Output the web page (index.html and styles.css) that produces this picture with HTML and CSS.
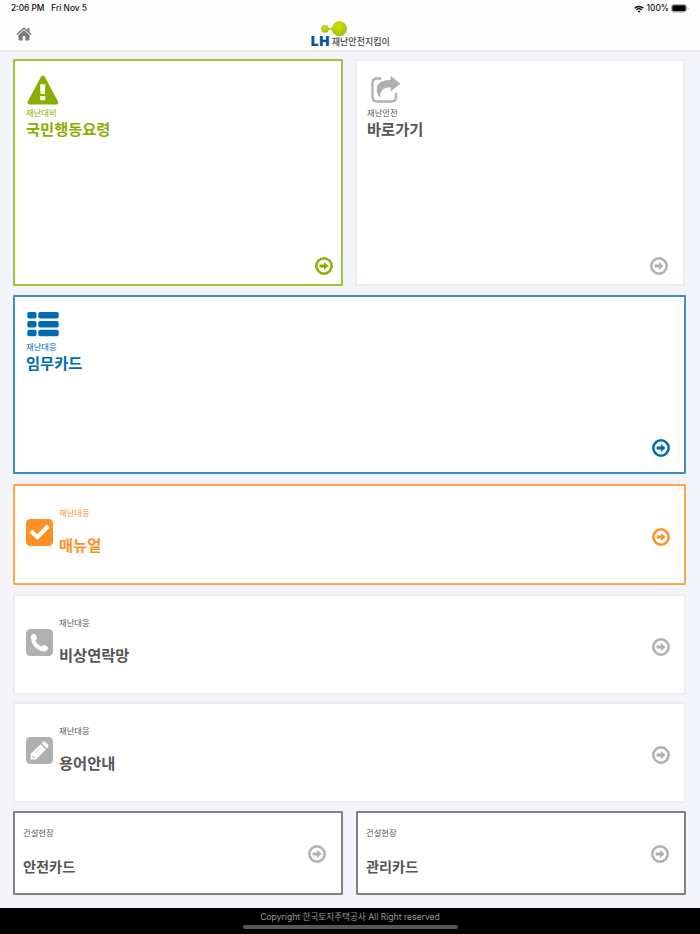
FILE: index.html
```
<!DOCTYPE html>
<html lang="ko">
<head>
  <meta charset="utf-8">
  <title>LH 재난안전지킴이</title>
  <link rel="stylesheet" href="styles.css">
</head>
<body>
  <svg width="0" height="0" class="defs">
    <symbol id="arrow" viewBox="0 0 18 18">
      <circle cx="9" cy="9" r="7.7" fill="none" stroke="currentColor" stroke-width="2.5"/>
      <path d="M4.6 7.500H9V4.900L13.500 9 9 13.100V10.500H4.6z" fill="currentColor"/>
    </symbol>
  </svg>

  <div class="status">
    <span class="time">2:06 PM</span>
    <span class="date">Fri Nov 5</span>
    <svg class="wifi" width="10" height="8" viewBox="0 0 10 8">
      <path d="M.7 3.2a6.2 6.2 0 0 1 8.6 0M2.3 4.9a3.9 3.9 0 0 1 5.4 0" fill="none" stroke="#111" stroke-width="1.4"/>
      <path d="M5 7.7L3.5 6.2a2.2 2.2 0 0 1 3 0z" fill="#111"/>
    </svg>
    <span class="percent">100%</span>
    <svg class="battery" width="18" height="9" viewBox="0 0 18 9">
      <rect x=".5" y=".5" width="15" height="7.6" rx="2.2" fill="#fff" stroke="#aaa"/>
      <rect x="1.3" y="1.3" width="13.4" height="6" rx="1.4" fill="#000"/>
      <path d="M16.6 3v2.7q1-.4 1-1.35T16.600 3z" fill="#aaa"/>
    </svg>
  </div>

  <header class="header">
    <svg class="home" width="16" height="14" viewBox="0 0 16 14">
      <path d="M8 .3L.3 7l.9 1L8 2.200 14.800 8l.9-1L13.400 5V.9h-2v2.400z" fill="#7b7b7b"/>
      <path d="M8 3.300L2.500 8v4.700q0 .7.700.7h3.500V9.300h2.600v4.100h3.500q.7 0 .7-.7V8z" fill="#7b7b7b"/>
    </svg>
    <div class="logo">
      <svg class="drops" width="28" height="17" viewBox="0 0 28 17">
        <defs>
          <radialGradient id="lime" cx=".45" cy=".35" r=".65">
            <stop offset="0" stop-color="#d2e200"/>
            <stop offset="1" stop-color="#98c211"/>
          </radialGradient>
        </defs>
        <circle cx="5" cy="7.800" r="3.900" fill="url(#lime)"/>
        <path d="M7.500 6.500Q10 8.600 14.500 4.500v6.600Q10 7.200 7.500 9.600z" fill="#b3d00a"/>
        <circle cx="19.500" cy="7.700" r="7.500" fill="url(#lime)"/>
      </svg>
      <b class="lh">LH</b>
      <span class="name">재난안전지킴이</span>
    </div>
  </header>

  <main class="cards">
    <div class="row top">
      <a class="card tall green">
        <svg class="icon" width="32" height="30" viewBox="0 0 32 30">
          <path d="M14 1.800q1.900-2.500 3.800 0L31 26.500q1 2.700-1.500 3H2.300Q-.2 29.200.8 26.500z" fill="currentColor"/>
          <path d="M13 9.300h5.400l-.6 9.700h-4.200zM13.200 21h5v4.300h-5z" fill="#fff"/>
        </svg>
        <span class="sub">재난대비</span>
        <strong class="title">국민행동요령</strong>
        <svg class="arrow"><use href="#arrow"/></svg>
      </a>
      <a class="card tall plain share">
        <svg class="icon" width="32" height="30" viewBox="0 0 32 30">
          <path d="M11.500 3.500H8Q3.500 3.500 3.500 8v14Q3.500 26.500 8 26.500h14.500q4.500 0 4.500-4.500V19" fill="none" stroke="#b0b0b0" stroke-width="2.300" stroke-linecap="round"/>
          <path d="M21.500.8L31.500 8.700 21.500 16.500V12.200Q11 12 11 23 5.500 15 9 9.500 12.500 4.800 21.500 5z" fill="#b0b0b0"/>
        </svg>
        <span class="sub">재난안전</span>
        <strong class="title">바로가기</strong>
        <svg class="arrow"><use href="#arrow"/></svg>
      </a>
    </div>

    <a class="card tall blue">
      <svg class="icon" width="32" height="26" viewBox="0 0 32 26" fill="currentColor">
        <rect x=".3" y="1" width="9.200" height="6.600" rx="1.800"/>
        <rect x="11.300" y="1" width="20.400" height="6.600" rx="1.800"/>
        <rect x=".3" y="9.900" width="9.200" height="6.600" rx="1.800"/>
        <rect x="11.300" y="9.900" width="20.400" height="6.600" rx="1.800"/>
        <rect x=".3" y="18.700" width="9.200" height="6.600" rx="1.800"/>
        <rect x="11.300" y="18.700" width="20.400" height="6.600" rx="1.800"/>
      </svg>
      <span class="sub">재난대응</span>
      <strong class="title">임무카드</strong>
      <svg class="arrow"><use href="#arrow"/></svg>
    </a>

    <a class="card wide orange">
      <svg class="icon" width="27" height="27" viewBox="0 0 27 27">
        <rect width="27" height="27" rx="4.500" fill="currentColor"/>
        <path d="M6.300 13.500l5 4.600L20.700 8.500" fill="none" stroke="#fff" stroke-width="4.200" stroke-linecap="square"/>
      </svg>
      <div class="text">
        <span class="sub">재난대응</span>
        <strong class="title">매뉴얼</strong>
      </div>
      <svg class="arrow"><use href="#arrow"/></svg>
    </a>

    <a class="card wide plain phone">
      <svg class="icon" width="27" height="27" viewBox="0 0 27 27">
        <rect width="27" height="27" rx="4.500" fill="#b0b0b0"/>
        <path d="M7.800 4.800Q4.700 5.500 4.800 8.700 6 19.500 17 22.400q4.300.5 5.300-3.400 0-.7-.5-1L18.300 16q-.8-.3-1.300.3l-1.500 1.500Q11.500 16 9.300 11.700l1.600-1.600q.5-.5.200-1.200L9.300 5.300Q8.800 4.500 7.800 4.800z" fill="#fff"/>
      </svg>
      <div class="text">
        <span class="sub">재난대응</span>
        <strong class="title">비상연락망</strong>
      </div>
      <svg class="arrow"><use href="#arrow"/></svg>
    </a>

    <a class="card wide plain terms">
      <svg class="icon" width="27" height="27" viewBox="0 0 27 27">
        <rect width="27" height="27" rx="4.500" fill="#b0b0b0"/>
        <path d="M4.600 22.500V17L14.600 7.200 19.800 12.400 10 22.500zM15.600 6.200l1.200-1.200q1.400-1 2.700 0L22 7.600q1 1.200 0 2.600l-1.200 1.200z" fill="#fff"/>
        <path d="M9.500 16L14.500 11M6.800 18.300v2H9" fill="none" stroke="#b0b0b0" stroke-width=".7"/>
      </svg>
      <div class="text">
        <span class="sub">재난대응</span>
        <strong class="title">용어안내</strong>
      </div>
      <svg class="arrow"><use href="#arrow"/></svg>
    </a>

    <div class="row bottom">
      <a class="card small dark">
        <div class="text">
          <span class="sub">건설현장</span>
          <strong class="title">안전카드</strong>
        </div>
        <svg class="arrow"><use href="#arrow"/></svg>
      </a>
      <a class="card small dark">
        <div class="text">
          <span class="sub">건설현장</span>
          <strong class="title">관리카드</strong>
        </div>
        <svg class="arrow"><use href="#arrow"/></svg>
      </a>
    </div>
  </main>

  <footer class="footer">
    <span>Copyright 한국토지주택공사 All Right reserved</span>
    <div class="indicator"></div>
  </footer>
</body>
</html>
```
FILE: styles.css
```
* {
  box-sizing: border-box;
}

body {
  margin: 0;
  height: 934px;
  display: flex;
  flex-direction: column;
  overflow: hidden;
  background: #f4f5fa;
  color: #555;
  font-family: "Noto Sans CJK KR", sans-serif;
}

svg {
  display: block;
  flex: none;
}

.defs {
  position: absolute;
}

.status {
  height: 17px;
  padding: 0 11px;
  display: flex;
  align-items: center;
  background: #fefefe;
  color: #111;
  font: 500 8.3px/17px Inter, sans-serif;
}

.date {
  margin-left: 7px;
}

.wifi {
  margin-left: auto;
}

.percent {
  margin: 0 2px 0 3px;
}

.header {
  height: 35px;
  padding: 10px 16px 0;
  display: grid;
  grid-template-columns: 1fr auto 1fr;
  background: #fefefe;
  border-bottom: 2px solid #e6e6e9;
}

.logo {
  display: flex;
  align-items: flex-end;
  position: relative;
  height: 21px;
}

.drops {
  position: absolute;
  left: 10px;
  top: -6px;
}

.lh {
  position: relative;
  color: #0b50a0;
  font: 800 14.5px/15px "Open Sans", sans-serif;
}

.name {
  margin-left: 2px;
  font-size: 9px;
  font-weight: 500;
  line-height: 13px;
  color: #444;
}

.cards {
  padding: 7px 14px 0 13px;
}

.row {
  display: grid;
  grid-template-columns: 330px 330px;
  gap: 12px;
}

.card {
  display: flex;
  background: #fff;
  border: 2px solid #eeeef1;
  border-radius: 1px;
}

.sub {
  font-size: 8.3px;
  line-height: 12px;
}

.title {
  font-size: 15.3px;
  line-height: 20px;
  font-weight: 700;
}

.arrow {
  width: 18px;
  height: 18px;
  margin-left: auto;
  color: #b0b0b0;
}

.tall {
  flex-direction: column;
  height: 227px;
  padding: 14px 8px 9px 11px;
}

.tall .icon {
  margin: 0 0 1px 1px;
}

.tall .arrow {
  margin-top: auto;
}

.share {
  padding-left: 10px;
  padding-right: 15px;
}

.share .icon {
  margin-left: 2px;
}

.green {
  border-color: #a5c23d;
  color: #8aae00;
}

.blue {
  height: 179px;
  margin-top: 9px;
  padding: 14px 14px 15px 11px;
  border-color: #3f8cc6;
  color: #006ab3;
}

.blue .icon {
  margin-bottom: 3px;
}

.green .arrow,
.blue .arrow,
.orange .arrow {
  color: inherit;
}

.wide {
  height: 101px;
  margin-top: 10px;
  padding: 20px 14px 0 11px;
}

.wide .icon {
  margin: 13px 6px 0 0;
}

.wide .arrow {
  margin-top: 22px;
}

.text {
  display: flex;
  flex-direction: column;
}

.wide .title {
  margin-top: 16px;
}

.orange {
  border-color: #ffa64d;
  color: #ff9124;
}

.phone {
  margin-top: 9px;
}

.terms {
  margin-top: 7px;
}

.bottom {
  margin-top: 8px;
  gap: 13px;
}

.small {
  height: 84px;
  padding: 13px 15px 0 8px;
}

.small .title {
  margin-top: 18px;
  font-size: 14.2px;
}

.small .arrow {
  margin-top: 19px;
}

.dark {
  border-color: #828282;
}

.footer {
  height: 26px;
  margin-top: auto;
  padding-top: 3px;
  background: #000;
  color: #999;
  text-align: center;
  font: 8.6px/13px Inter, "Noto Sans CJK KR", sans-serif;
}

.footer span {
  display: block;
}

.indicator {
  width: 215px;
  height: 4px;
  margin: 1px auto 0;
  border-radius: 2px;
  background: #555;
}
```
